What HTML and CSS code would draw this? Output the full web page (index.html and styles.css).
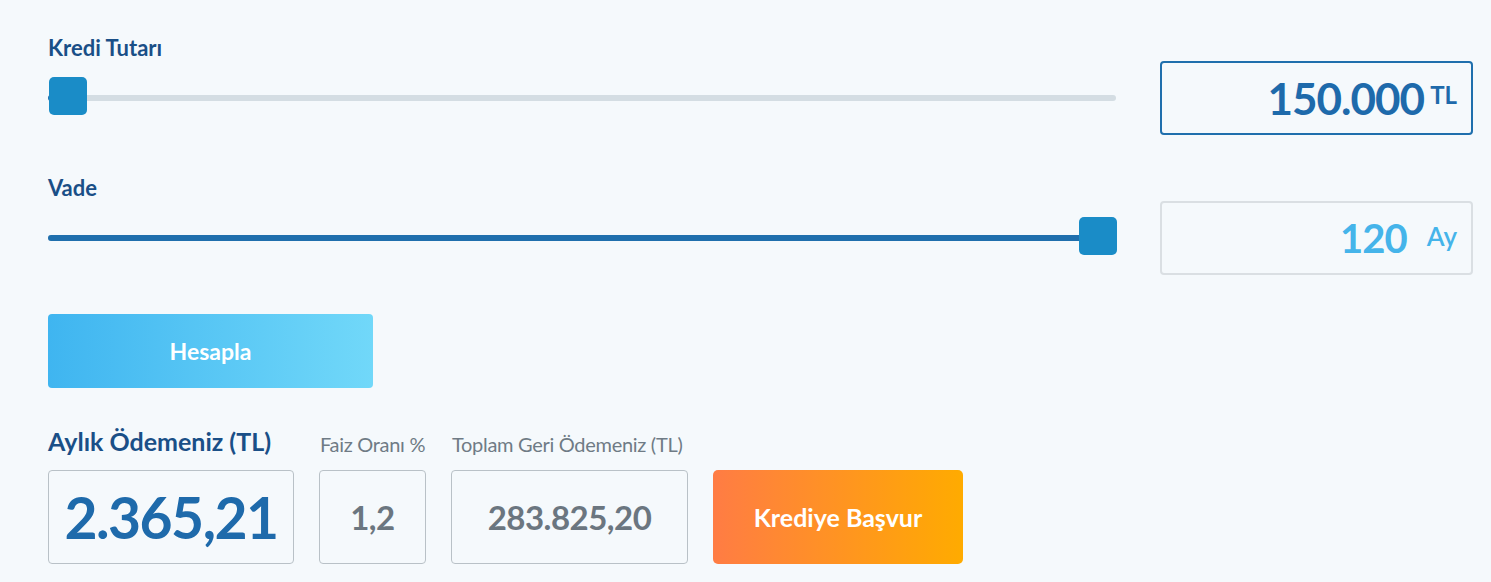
FILE: index.html
```html
<!DOCTYPE html>
<html>
<head>
  <meta charset="utf-8">
  <link rel="stylesheet" href="styles.css">
  <title>Kredi Hesaplama</title>
</head>
<body>
  <div class="calc">
    <div class="row">
      <div class="field">
        <div class="label">Kredi Tutarı</div>
        <div class="sliderArea">
          <div class="track">
            <div class="fill" style="width:1%"></div>
            <div class="thumb" style="left:1px"></div>
          </div>
        </div>
      </div>
      <div class="valueBox active">
        <span class="num">150.000</span><span class="unit">TL</span>
      </div>
    </div>

    <div class="row second">
      <div class="field">
        <div class="label">Vade</div>
        <div class="sliderArea">
          <div class="track">
            <div class="fill" style="width:98%"></div>
            <div class="thumb" style="left:calc(100% - 37px)"></div>
          </div>
        </div>
      </div>
      <div class="valueBox light">
        <span class="num">120</span><span class="unit">Ay</span>
      </div>
    </div>

    <button class="calcBtn">Hesapla</button>

    <div class="results">
      <div class="resLabel big">Aylık Ödemeniz (TL)</div>
      <div class="resLabel">Faiz Oranı %</div>
      <div class="resLabel">Toplam Geri Ödemeniz (TL)</div>
      <div></div>
      <div class="resBox main">2.365,21</div>
      <div class="resBox">1,2</div>
      <div class="resBox">283.825,20</div>
      <button class="applyBtn">Krediye Başvur</button>
    </div>
  </div>
</body>
</html>
```

FILE: styles.css
```css
body {
  margin: 0;
  background-color: #f5f9fc;
  font-family: 'Lato', 'Open Sans', sans-serif;
}
.calc {
  padding: 35px 18px 0 48px;
}
.row {
  display: grid;
  grid-template-columns: 1fr 313px;
  column-gap: 44px;
  align-items: end;
}
.row.second {
  margin-top: 40px;
}
.label {
  font-size: 22px;
  font-weight: bold;
  color: #1a4f87;
  height: 26px;
  line-height: 26px;
}
.sliderArea {
  height: 74px;
  display: flex;
  align-items: center;
}
.track {
  position: relative;
  width: 100%;
  height: 6px;
  border-radius: 3px;
  background-color: #d4dde3;
}
.fill {
  height: 6px;
  border-radius: 3px;
  background-color: #1f6fad;
}
.thumb {
  position: absolute;
  top: -18px;
  width: 38px;
  height: 38px;
  border-radius: 5px;
  background-color: #1a8cc7;
}
.valueBox {
  box-sizing: border-box;
  height: 74px;
  border-radius: 4px;
  display: flex;
  justify-content: flex-end;
  align-items: center;
  padding-right: 14px;
  font-weight: bold;
}
.valueBox.active {
  border: 2px solid #1f6fad;
  color: #1e6aab;
}
.valueBox.light {
  border: 2px solid #dadfe3;
  color: #45b4ea;
}
.valueBox .num {
  font-size: 44px;
  letter-spacing: -1px;
}
.valueBox.active .unit {
  font-size: 24px;
  margin-left: 6px;
  margin-top: -8px;
}
.valueBox.light .num {
  font-size: 40px;
}
.valueBox.light .unit {
  font-size: 26px;
  margin-left: 20px;
  margin-top: -4px;
  font-weight: 600;
}
.calcBtn {
  display: block;
  margin-top: 39px;
  width: 325px;
  height: 74px;
  border: none;
  border-radius: 4px;
  background: linear-gradient(to right, #3fb5f0 0%, #71d8f9 100%);
  color: white;
  font-family: 'Lato', sans-serif;
  font-size: 23px;
  font-weight: bold;
}
.results {
  display: grid;
  grid-template-columns: 246px 107px 237px 250px;
  column-gap: 25px;
  row-gap: 14px;
  margin-top: 38px;
  align-items: end;
}
.resLabel {
  font-size: 20px;
  color: #6f7b85;
  white-space: nowrap;
  padding-left: 1px;
  letter-spacing: -0.3px;
}
.resLabel.big {
  font-size: 25px;
  font-weight: bold;
  color: #1a4f87;
  padding-left: 0;
  letter-spacing: 0;
}
.resBox {
  box-sizing: border-box;
  height: 94px;
  border: 1px solid #b9c1c7;
  border-radius: 4px;
  display: flex;
  justify-content: center;
  align-items: center;
  font-size: 33px;
  font-weight: bold;
  color: #6b7680;
  letter-spacing: -0.5px;
}
.resBox.main {
  font-size: 57px;
  color: #1e6aab;
  letter-spacing: -1.5px;
}
.applyBtn {
  height: 94px;
  border: none;
  border-radius: 5px;
  background: linear-gradient(to right, #ff7c44 0%, #ffab00 100%);
  color: white;
  font-family: 'Lato', sans-serif;
  font-size: 25px;
  font-weight: bold;
}
```
